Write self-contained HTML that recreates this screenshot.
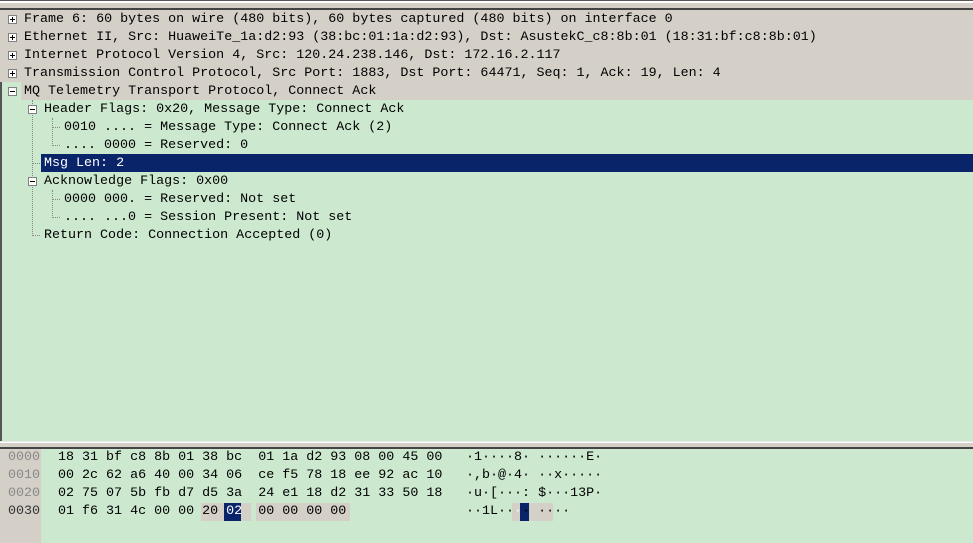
<!DOCTYPE html>
<html><head><style>
body{margin:0;width:973px;height:543px;overflow:hidden;background:#cce8cf;font-family:"Liberation Mono",monospace;font-size:13.35px;position:relative}
.a{position:absolute}
.r{position:absolute;left:0;right:0;height:18px;line-height:19px;white-space:pre;color:#000}
.g{background:#d4d0c8}
.box{position:absolute;width:7px;height:7px;border:1px solid #808080;background:#fff;top:5px}
.box:before{content:"";position:absolute;left:1px;top:3px;width:5px;height:1px;background:#000}
.p:after{content:"";position:absolute;left:3px;top:1px;width:1px;height:5px;background:#000}
.t{position:absolute;top:0}
.dv{position:absolute;border-left:1px dotted #888}
.dh{position:absolute;border-top:1px dotted #888;width:7px}
.h{position:absolute;height:18px;line-height:18px;white-space:pre}
</style></head><body>
<div class="a" style="left:0;top:0;width:973px;height:1px;background:#555"></div>
<div class="a" style="left:0;top:1px;width:973px;height:2px;background:#fff"></div>
<div class="a" style="left:0;top:3px;width:973px;height:5px;background:#d4d0c8"></div>
<div class="a" style="left:0;top:8px;width:973px;height:2px;background:#444"></div>
<div class="a" style="left:0;top:10px;width:2px;height:431px;background:#555"></div>

<div class="r g" style="top:10px"><div class="box p" style="left:8px"></div><span class="t" style="left:24px">Frame 6: 60 bytes on wire (480 bits), 60 bytes captured (480 bits) on interface 0</span></div>
<div class="r g" style="top:28px"><div class="box p" style="left:8px"></div><span class="t" style="left:24px">Ethernet II, Src: HuaweiTe_1a:d2:93 (38:bc:01:1a:d2:93), Dst: AsustekC_c8:8b:01 (18:31:bf:c8:8b:01)</span></div>
<div class="r g" style="top:46px"><div class="box p" style="left:8px"></div><span class="t" style="left:24px">Internet Protocol Version 4, Src: 120.24.238.146, Dst: 172.16.2.117</span></div>
<div class="r g" style="top:64px"><div class="box p" style="left:8px"></div><span class="t" style="left:24px">Transmission Control Protocol, Src Port: 1883, Dst Port: 64471, Seq: 1, Ack: 19, Len: 4</span></div>
<div class="r g" style="top:82px;left:21px"><div class="box" style="left:-13px"></div><span class="t" style="left:3px">MQ Telemetry Transport Protocol, Connect Ack</span></div>

<div class="dv" style="left:32px;top:100px;height:136px"></div>
<div class="dv" style="left:52px;top:118px;height:28px"></div>
<div class="dv" style="left:52px;top:190px;height:28px"></div>
<div class="r" style="top:100px"><div class="box" style="left:28px"></div><span class="t" style="left:44px">Header Flags: 0x20, Message Type: Connect Ack</span></div>
<div class="r" style="top:118px"><div class="dh" style="left:53px;top:9px"></div><span class="t" style="left:64px">0010 .... = Message Type: Connect Ack (2)</span></div>
<div class="r" style="top:136px"><div class="dh" style="left:53px;top:9px"></div><span class="t" style="left:64px">.... 0000 = Reserved: 0</span></div>
<div class="r" style="top:154px"><div class="dh" style="left:33px;top:9px"></div><div class="a" style="left:41px;right:0;top:0;height:18px;background:#0a246a"></div><span class="t" style="left:44px;color:#fff">Msg Len: 2</span></div>
<div class="r" style="top:172px"><div class="box" style="left:28px"></div><span class="t" style="left:44px">Acknowledge Flags: 0x00</span></div>
<div class="r" style="top:190px"><div class="dh" style="left:53px;top:9px"></div><span class="t" style="left:64px">0000 000. = Reserved: Not set</span></div>
<div class="r" style="top:208px"><div class="dh" style="left:53px;top:9px"></div><span class="t" style="left:64px">.... ...0 = Session Present: Not set</span></div>
<div class="r" style="top:226px"><div class="dh" style="left:33px;top:9px"></div><span class="t" style="left:44px">Return Code: Connection Accepted (0)</span></div>

<div class="a" style="left:0;top:441px;width:973px;height:1px;background:#e8e8e8"></div>
<div class="a" style="left:0;top:442px;width:973px;height:1px;background:#fff"></div>
<div class="a" style="left:0;top:443px;width:973px;height:4px;background:#d4d0c8"></div>
<div class="a" style="left:0;top:447px;width:973px;height:2px;background:#444"></div>
<div class="a" style="left:0;top:449px;width:41px;height:94px;background:#d4d0c8"></div>

<div class="h" style="left:8px;top:449px;color:#888">0000</div>
<div class="h" style="left:8px;top:467px;color:#888">0010</div>
<div class="h" style="left:8px;top:485px;color:#888">0020</div>
<div class="h" style="left:8px;top:503px;color:#333">0030</div>
<div class="h" style="left:58px;top:449px">18 31 bf c8 8b 01 38 bc  01 1a d2 93 08 00 45 00</div>
<div class="h" style="left:58px;top:467px">00 2c 62 a6 40 00 34 06  ce f5 78 18 ee 92 ac 10</div>
<div class="h" style="left:58px;top:485px">02 75 07 5b fb d7 d5 3a  24 e1 18 d2 31 33 50 18</div>
<div class="a" style="left:201px;top:503px;width:50px;height:18px;background:#d4d0c8"></div>
<div class="a" style="left:224px;top:503px;width:17px;height:18px;background:#0a246a"></div>
<div class="a" style="left:256px;top:503px;width:94px;height:18px;background:#d4d0c8"></div>
<div class="h" style="left:58px;top:503px">01 f6 31 4c 00 00 20 <span style="color:#fff">02</span>  00 00 00 00</div>
<div class="a" style="left:512px;top:503px;width:41px;height:18px;background:#d4d0c8"></div>
<div class="a" style="left:520px;top:503px;width:9px;height:18px;background:#0a246a"></div>
<div class="h" style="left:466px;top:449px">·1····8· ······E·</div>
<div class="h" style="left:466px;top:467px">·,b·@·4· ··x·····</div>
<div class="h" style="left:466px;top:485px">·u·[···: $···13P·</div>
<div class="h" style="left:466px;top:503px">··1L··<span style="color:#fff">·</span>· ····</div>
</body></html>
